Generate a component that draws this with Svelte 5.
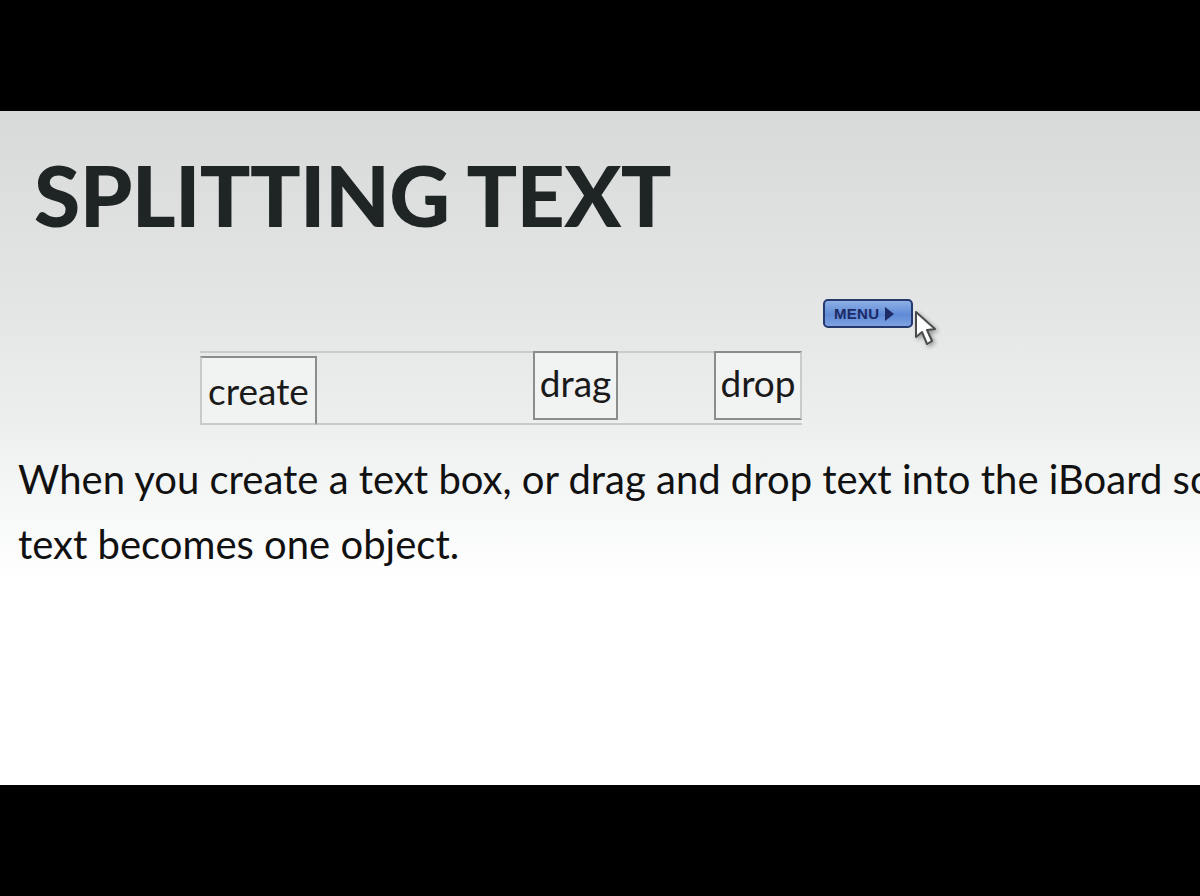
<script>
  const lines = [
    'When you create a text box, or drag and drop text into the iBoard so that the',
    'text becomes one object.'
  ];
</script>

<div class="frame">
  <div class="slide">
    <h1>SPLITTING TEXT</h1>
    <div class="menu-row">
      <div class="menu-wrap">
        <button class="menu">MENU<span class="arrow"></span></button>
        <svg class="cursor" width="24" height="38" viewBox="0 0 24 38">
          <path d="M2 1 L2 26 L8 21 L13 33 L18 30 L13 19 L21 18 Z" fill="#fff" stroke="#4a4c4e" stroke-width="2" stroke-linejoin="round" />
        </svg>
      </div>
    </div>
    <div class="strip">
      <span class="word create">create</span>
      <span class="word drag">drag</span>
      <span class="word drop">drop</span>
    </div>
    <div class="copy">
      {#each lines as line}
        <p>{line}</p>
      {/each}
    </div>
  </div>
</div>

<style>
  :global(body) {
    background: #000;
  }

  .frame {
    height: 896px;
    padding: 111px 0;
    box-sizing: border-box;
    background: #000;
    overflow: hidden;
  }

  .slide {
    height: 674px;
    overflow: hidden;
    background: linear-gradient(180deg, #d8dada 0%, #e2e4e4 25%, #eceeee 45%, #f6f7f7 58%, #ffffff 70%, #ffffff 100%);
    font-family: Lato, "Liberation Sans", sans-serif;
  }

  h1 {
    margin: 0;
    padding: 39px 0 0 34px;
    height: 90px;
    font-size: 84px;
    line-height: 90px;
    font-weight: 900;
    letter-spacing: -0.6px;
    color: #1f2425;
    white-space: nowrap;
  }

  .menu-row {
    display: flex;
    margin-top: 59px;
    padding-left: 823px;
    height: 29px;
  }

  .menu-wrap {
    position: relative;
  }

  .menu {
    display: flex;
    align-items: center;
    gap: 6px;
    width: 90px;
    height: 29px;
    padding: 0 0 0 9px;
    box-sizing: border-box;
    border: 2px solid #26396f;
    border-radius: 5px;
    background: linear-gradient(180deg, #8fb0e6 0%, #5f8ad6 55%, #7ea2e0 100%);
    color: #1c2a66;
    font-family: "Liberation Sans", Arial, sans-serif;
    font-size: 15px;
    font-weight: 700;
    letter-spacing: 0.3px;
  }

  .arrow {
    width: 0;
    height: 0;
    border-left: 9px solid #1c2a66;
    border-top: 7px solid transparent;
    border-bottom: 7px solid transparent;
  }

  .cursor {
    position: absolute;
    left: 91px;
    top: 12px;
    filter: drop-shadow(2px 2px 2px rgba(0, 0, 0, 0.35));
  }

  .strip {
    display: flex;
    align-items: flex-start;
    margin: 23px 0 0 200px;
    width: 602px;
    height: 74px;
    box-sizing: border-box;
    border: 2px solid #c9cbcb;
    border-left: 0;
    border-right: 0;
    position: relative;
  }

  .word {
    display: flex;
    align-items: center;
    justify-content: center;
    box-sizing: border-box;
    height: 69px;
    margin-top: -2px;
    border: 2px solid #8b8d8d;
    font-size: 37px;
    color: #1a1a1a;
    background: #f1f2f2;
  }

  .create {
    width: 117px;
    margin-top: 3px;
    border-left-color: #c9cbcb;
    border-bottom-color: #c9cbcb;
  }

  .drag {
    width: 85px;
    margin-left: 216px;
    padding-bottom: 6px;
  }

  .drop {
    width: 88px;
    margin-left: 96px;
    padding-bottom: 6px;
    border-right-color: #c9cbcb;
  }

  .copy {
    margin-top: 22px;
    padding-left: 18px;
  }

  p {
    margin: 0;
    height: 65px;
    line-height: 65px;
    font-size: 40px;
    color: #111;
    white-space: nowrap;
  }
</style>
